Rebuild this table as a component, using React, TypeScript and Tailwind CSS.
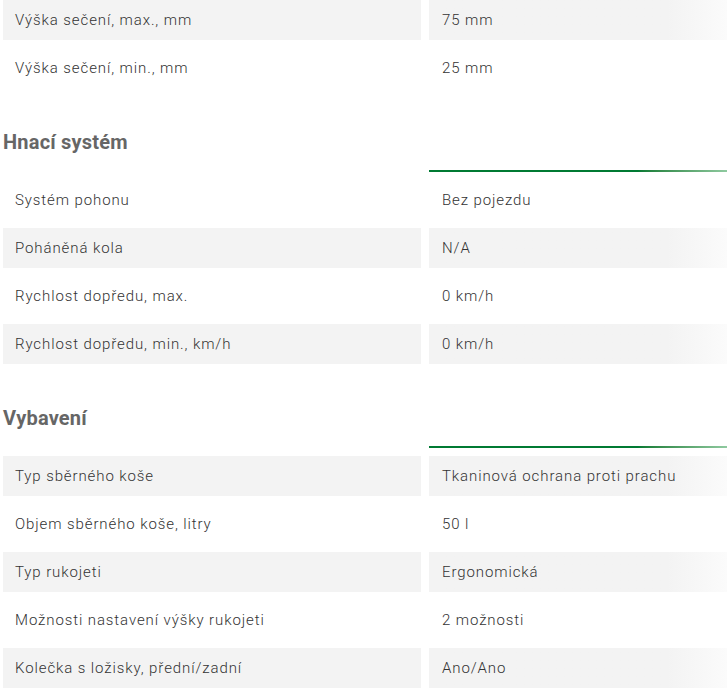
type Row = { label: string; value: string; shaded: boolean };

const top: Row[] = [
  { label: "Výška sečení, max., mm", value: "75 mm", shaded: true },
  { label: "Výška sečení, min., mm", value: "25 mm", shaded: false },
];

const sections: { title: string; rows: Row[] }[] = [
  {
    title: "Hnací systém",
    rows: [
      { label: "Systém pohonu", value: "Bez pojezdu", shaded: false },
      { label: "Poháněná kola", value: "N/A", shaded: true },
      { label: "Rychlost dopředu, max.", value: "0 km/h", shaded: false },
      { label: "Rychlost dopředu, min., km/h", value: "0 km/h", shaded: true },
    ],
  },
  {
    title: "Vybavení",
    rows: [
      { label: "Typ sběrného koše", value: "Tkaninová ochrana proti prachu", shaded: true },
      { label: "Objem sběrného koše, litry", value: "50 l", shaded: false },
      { label: "Typ rukojeti", value: "Ergonomická", shaded: true },
      { label: "Možnosti nastavení výšky rukojeti", value: "2 možnosti", shaded: false },
      { label: "Kolečka s ložisky, přední/zadní", value: "Ano/Ano", shaded: true },
    ],
  },
];

function SpecRow({ row }: { row: Row }) {
  return (
    <div className="grid grid-cols-[418px_1fr] gap-2 h-10">
      <div className={`flex items-center pl-3 ${row.shaded ? "bg-[#f3f3f3]" : ""}`}>
        {row.label}
      </div>
      <div
        className={`flex items-center pl-[13px] ${
          row.shaded ? "bg-gradient-to-r from-[#f3f3f3] from-80% to-[#fbfbfb]" : ""
        }`}
      >
        {row.value}
      </div>
    </div>
  );
}

export default function App() {
  return (
    <div
      className="w-[727px] h-[689px] overflow-hidden bg-white pl-[3px] text-[15px] font-light tracking-[0.06em] text-[#333]"
      style={{ fontFamily: "Roboto, 'Liberation Sans', sans-serif" }}
    >
      <div className="flex flex-col gap-2">
        {top.map((r) => (
          <SpecRow key={r.label} row={r} />
        ))}
      </div>

      {sections.map((s) => (
        <div key={s.title} className="pt-10">
          <h2 className="h-7 flex items-center text-[20px] font-bold tracking-[0.01em] text-[#666]">
            {s.title}
          </h2>
          <div className="grid grid-cols-[418px_1fr] gap-2 mt-[14px] mb-2">
            <div />
            <div className="h-[2px] bg-gradient-to-r from-[#007a33] from-70% to-[#8fcaa0]" />
          </div>
          <div className="flex flex-col gap-2">
            {s.rows.map((r) => (
              <SpecRow key={r.label} row={r} />
            ))}
          </div>
        </div>
      ))}
    </div>
  );
}
